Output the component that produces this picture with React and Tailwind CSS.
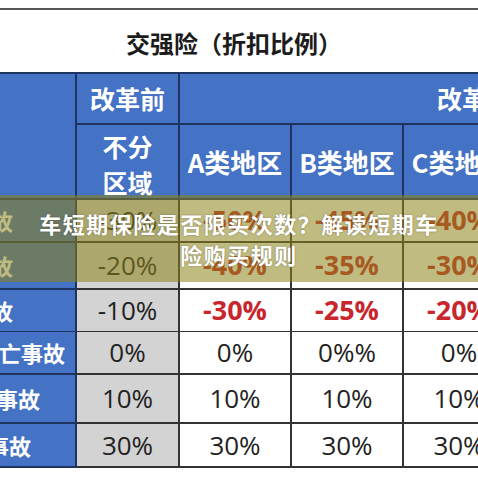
import React from "react";

const cjk = { fontFamily: '"Noto Sans CJK SC", "Noto Sans", sans-serif' };
const num = { fontFamily: '"Open Sans", "Noto Sans CJK SC", sans-serif' };

const rows = [
  { h: "h-[43px]", label: "交通事故", pr: "pr-[62px]", before: "-30%", a: "-50%", b: "-45%", c: "-40%", red: true },
  { h: "h-[47px]", label: "交通事故", pr: "pr-[62px]", before: "-20%", a: "-40%", b: "-35%", c: "-30%", red: true },
  { h: "h-[42px]", label: "交通事故", pr: "pr-[62px]", before: "-10%", a: "-30%", b: "-25%", c: "-20%", red: true },
  { h: "h-[43px]", label: "涉及死亡事故", pr: "pr-[10px]", before: "0%", a: "0%", b: "0%%", c: "0%" },
  { h: "h-[49px]", label: "责任事故", pr: "pr-[35px]", before: "10%", a: "10%", b: "10%", c: "10%" },
  { h: "h-[44px]", label: "死亡事故", pr: "pr-[44px]", before: "30%", a: "30%", b: "30%", c: "30%" },
];

function ValueCell({ children, red, gray }) {
  return (
    <div
      className={`flex items-center justify-center border-r-2 border-b-2 border-[#333] whitespace-nowrap ${gray ? "bg-[#d3d3d3]" : "bg-white"} ${red ? "text-[27px] font-bold text-[#c8262e]" : "text-[26px] font-normal text-[#222]"}`}
      style={num}
    >
      {children}
    </div>
  );
}

export default function App() {
  return (
    <div className="relative w-[478px] h-[478px] overflow-hidden bg-white" style={cjk}>
      <div className="pt-[8px]">
        <div className="border-t-2 border-[#555]" />
        <div className="h-[62px] flex items-center justify-center pr-[10px] pt-[4px] text-[24px] font-bold text-[#1c1c1c]">
          交强险（折扣比例）
        </div>
      </div>

      <div className="w-[516px] border-t-2 border-[#1f3360]">
        {/* header */}
        <div className="grid grid-cols-[77px_103px_336px]">
          <div className="row-span-2 bg-[#4472c4] border-r-2 border-b-2 border-[#1f3360]" />
          <div className="h-[51px] bg-[#4472c4] border-r-2 border-b-2 border-[#1f3360] flex items-center justify-center text-[25px] font-bold text-white">
            改革前
          </div>
          <div className="h-[51px] bg-[#4472c4] border-b-2 border-[#1f3360] flex items-center pl-[257px] text-[25px] font-bold text-white whitespace-nowrap">
            改革后
          </div>
          <div className="h-[75px] bg-[#4472c4] border-r-2 border-b-2 border-[#1f3360] flex flex-col items-center justify-center text-[25px] leading-[36px] font-bold text-white pt-[4px]">
            <span>不分</span>
            <span>区域</span>
          </div>
          <div className="grid grid-cols-[112px_112px_112px]">
            {["A类地区", "B类地区", "C类地区"].map((t) => (
              <div key={t} className="h-[75px] bg-[#4472c4] border-r-2 border-b-2 border-[#1f3360] flex items-center justify-center text-[26px] font-bold text-white whitespace-nowrap">
                {t}
              </div>
            ))}
          </div>
        </div>

        {/* body */}
        {rows.map((r, i) => (
          <div key={i} className={`grid grid-cols-[77px_103px_112px_112px_112px] ${r.h}`}>
            <div className={`flex items-center justify-end overflow-hidden whitespace-nowrap bg-[#4472c4] border-r-2 border-b-2 border-[#1f3360] text-[22px] font-bold text-white ${r.pr}`}>
              {r.label}
            </div>
            <ValueCell gray>{r.before}</ValueCell>
            <ValueCell red={r.red}>{r.a}</ValueCell>
            <ValueCell red={r.red}>{r.b}</ValueCell>
            <ValueCell red={r.red}>{r.c}</ValueCell>
          </div>
        ))}
      </div>

      {/* caption band over the table */}
      <div className="absolute left-0 top-[195px] w-full h-[87px] bg-[rgba(140,132,25,0.55)] flex flex-col items-center justify-center text-[22px] leading-[31px] font-bold text-white tracking-[1.5px] [text-shadow:0_0_2px_rgba(0,0,0,0.35)]">
        <span>车短期保险是否限买次数？解读短期车</span>
        <span>险购买规则</span>
      </div>
    </div>
  );
}
